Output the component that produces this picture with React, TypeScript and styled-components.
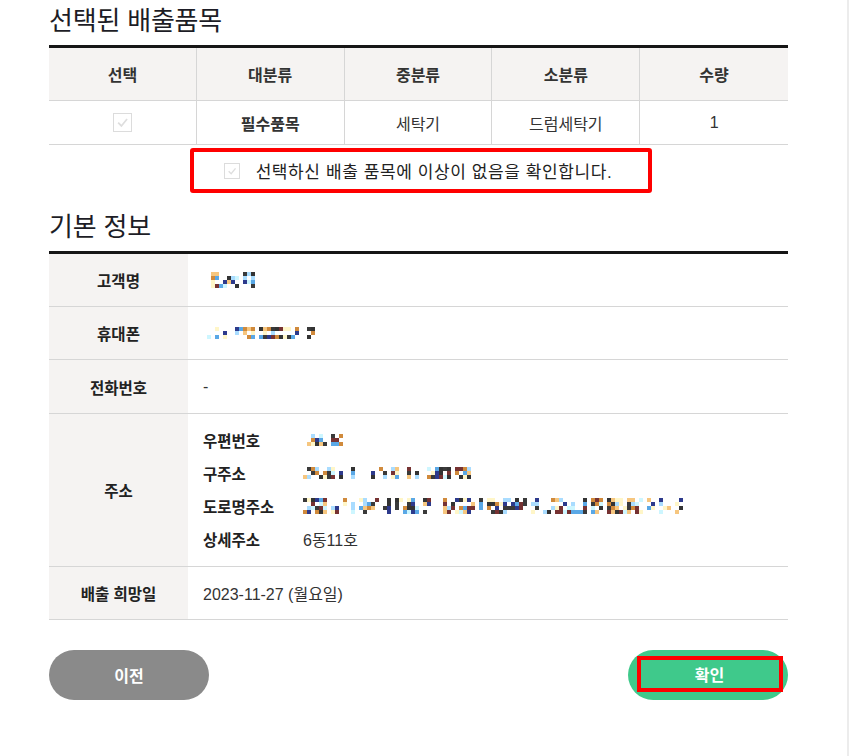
import React from "react";
import styled, { createGlobalStyle } from "styled-components";

const Global = createGlobalStyle`
  html, body { margin: 0; padding: 0; background: #fff; }
  body { font-family: "Liberation Sans", "Noto Sans CJK KR", "Noto Sans", sans-serif; color: #222; }
  * { box-sizing: border-box; }
`;

const Page = styled.div`
  width: 100%;
  min-height: 756px;
  border-right: 2px solid #ececec;
  padding: 0 0 40px 49px;
`;

const Content = styled.div`
  width: 739px;
`;

const Title = styled.h2<{ $top?: number }>`
  margin: ${(p) => p.$top ?? 0}px 0 0 0;
  height: 45px;
  line-height: 42px;
  font-size: 26px;
  font-weight: 400;
  color: #1d1d26;
  letter-spacing: -0.2px;
`;

const Grid = styled.div`
  border-top: 3px solid #161616;
  display: grid;
  grid-template-columns: repeat(5, 1fr);
`;

const HeadCell = styled.div<{ $last?: boolean }>`
  height: 53px;
  background: #f5f3f2;
  border-bottom: 1px solid #d6d6d6;
  border-right: ${(p) => (p.$last ? "none" : "1px solid #d6d6d6")};
  display: flex;
  align-items: center;
  justify-content: center;
  font-size: 16px;
  font-weight: 700;
  color: #333;
`;

const BodyCell = styled.div<{ $last?: boolean; $bold?: boolean }>`
  height: 44px;
  border-bottom: 1px solid #d6d6d6;
  border-right: ${(p) => (p.$last ? "none" : "1px solid #d6d6d6")};
  display: flex;
  align-items: center;
  justify-content: center;
  font-size: 16px;
  font-weight: ${(p) => (p.$bold ? 700 : 400)};
  color: #333;
`;

const Box = styled.span<{ $size: number }>`
  width: ${(p) => p.$size}px;
  height: ${(p) => p.$size}px;
  border: 1px solid #dcdcdc;
  background: #fff;
  display: inline-flex;
  align-items: center;
  justify-content: center;
  flex: none;
`;

const Check = ({ size }: { size: number }) => (
  <Box $size={size}>
    <svg width={size - 6} height={size - 6} viewBox="0 0 12 12">
      <path d="M2 6.2 L5 9.2 L10.2 2.8" fill="none" stroke="#dedede" strokeWidth="1.6" />
    </svg>
  </Box>
);

const ConfirmRow = styled.div`
  display: flex;
  justify-content: center;
  padding-top: 3px;
`;

const Highlight = styled.label`
  height: 45px;
  border: 4px solid #ff0000;
  border-radius: 3px;
  padding: 0 36px 0 30px;
  display: flex;
  align-items: center;
  gap: 16px;
  font-size: 17px;
  letter-spacing: 0.6px;
  color: #222;
  margin-left: 5px;
`;

const InfoTable = styled.div`
  border-top: 3px solid #161616;
`;

const InfoRow = styled.div<{ $h: number }>`
  display: grid;
  grid-template-columns: 139px 1fr;
  min-height: ${(p) => p.$h}px;
  border-bottom: 1px solid #d6d6d6;
`;

const Label = styled.div`
  background: #f5f3f2;
  display: flex;
  align-items: center;
  justify-content: center;
  font-size: 15.5px;
  font-weight: 700;
  color: #222;
`;

const Value = styled.div`
  display: flex;
  align-items: center;
  padding-left: 15px;
  font-size: 16px;
  color: #333;
`;

const AddrList = styled.div`
  display: flex;
  flex-direction: column;
  justify-content: center;
  padding: 9px 0 11px 15px;
`;

const AddrLine = styled.div`
  height: 33px;
  display: grid;
  grid-template-columns: 100px 1fr;
  align-items: center;
  font-size: 16px;
  color: #333;
`;

const AddrKey = styled.span`
  font-weight: 700;
  font-size: 15.5px;
  color: #222;
`;

const Buttons = styled.div`
  display: flex;
  justify-content: space-between;
  margin-top: 30px;
`;

const Btn = styled.button<{ $green?: boolean }>`
  width: 160px;
  height: 50px;
  border: none;
  border-radius: 25px;
  background: ${(p) => (p.$green ? "#3fc98b" : "#8a8a8a")};
  color: #fff;
  font-family: inherit;
  font-size: 16px;
  font-weight: 700;
  display: flex;
  align-items: center;
  justify-content: center;
  padding: 0;
`;

const RedFrame = styled.span`
  flex: none;
  width: 146px;
  height: 36px;
  margin-left: 3px;
  margin-top: -3px;
  border: 4px solid #ff0000;
  display: flex;
  align-items: center;
  justify-content: center;
`;

const palette = [
  "#333333", "#2d3a8c", "#d08a3c", "#f6c67f", "#fff6c8",
  "#cdf6ff", "#5aa8e6", "#763232", "#3a3a3a", "#a9dcff",
];

function Mosaic({ w, h, seed, cell = 4 }: { w: number; h: number; seed: number; cell?: number }) {
  let s = seed * 9301 + 49297;
  const rnd = () => {
    s = (s * 9301 + 49297) % 233280;
    return s / 233280;
  };
  const cols = Math.floor(w / cell);
  const rows = Math.floor(h / cell);
  const rects: React.ReactNode[] = [];
  for (let c = 0; c < cols; c++) {
    const gap = rnd() < 0.18;
    for (let r = 0; r < rows; r++) {
      if (gap || rnd() < 0.35) continue;
      const color = palette[Math.floor(rnd() * palette.length)];
      rects.push(<rect key={`${c}-${r}`} x={c * cell} y={r * cell} width={cell} height={cell} fill={color} />);
    }
  }
  return (
    <svg width={w} height={h} viewBox={`0 0 ${w} ${h}`} shapeRendering="crispEdges">
      {rects}
    </svg>
  );
}

const MosaicWrap = styled.span<{ $dx?: number }>`
  display: inline-flex;
  margin-left: ${(p) => p.$dx ?? 0}px;
`;

export default function App() {
  const heads = ["선택", "대분류", "중분류", "소분류", "수량"];
  return (
    <>
      <Global />
      <Page>
        <Content>
          <Title>선택된 배출품목</Title>
          <Grid>
            {heads.map((h, i) => (
              <HeadCell key={h} $last={i === 4}>{h}</HeadCell>
            ))}
            <BodyCell><Check size={19} /></BodyCell>
            <BodyCell $bold>필수품목</BodyCell>
            <BodyCell>세탁기</BodyCell>
            <BodyCell>드럼세탁기</BodyCell>
            <BodyCell $last>1</BodyCell>
          </Grid>
          <ConfirmRow>
            <Highlight>
              <Check size={16} />
              선택하신 배출 품목에 이상이 없음을 확인합니다.
            </Highlight>
          </ConfirmRow>

          <Title $top={13}>기본 정보</Title>
          <InfoTable>
            <InfoRow $h={53}>
              <Label>고객명</Label>
              <Value><MosaicWrap $dx={8}><Mosaic w={46} h={16} seed={3} /></MosaicWrap></Value>
            </InfoRow>
            <InfoRow $h={53}>
              <Label>휴대폰</Label>
              <Value><MosaicWrap $dx={4}><Mosaic w={110} h={12} seed={7} /></MosaicWrap></Value>
            </InfoRow>
            <InfoRow $h={54}>
              <Label>전화번호</Label>
              <Value>-</Value>
            </InfoRow>
            <InfoRow $h={153}>
              <Label>주소</Label>
              <AddrList>
                <AddrLine>
                  <AddrKey>우편번호</AddrKey>
                  <Mosaic w={40} h={12} seed={11} />
                </AddrLine>
                <AddrLine>
                  <AddrKey>구주소</AddrKey>
                  <Mosaic w={168} h={12} seed={21} />
                </AddrLine>
                <AddrLine>
                  <AddrKey>도로명주소</AddrKey>
                  <Mosaic w={380} h={16} seed={33} />
                </AddrLine>
                <AddrLine>
                  <AddrKey>상세주소</AddrKey>
                  <span>6동11호</span>
                </AddrLine>
              </AddrList>
            </InfoRow>
            <InfoRow $h={53}>
              <Label>배출 희망일</Label>
              <Value>2023-11-27 (월요일)</Value>
            </InfoRow>
          </InfoTable>

          <Buttons>
            <Btn>이전</Btn>
            <Btn $green>
              <RedFrame>확인</RedFrame>
            </Btn>
          </Buttons>
        </Content>
      </Page>
    </>
  );
}
